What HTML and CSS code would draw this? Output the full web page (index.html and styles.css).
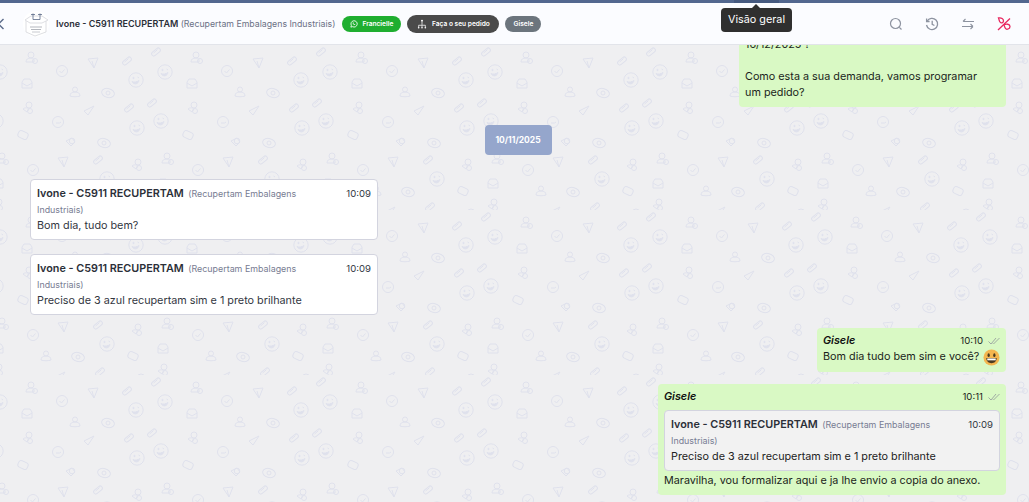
FILE: index.html
```html
<!DOCTYPE html>
<html lang="pt-BR">
<head>
  <meta charset="UTF-8" />
  <meta name="viewport" content="width=device-width, initial-scale=1.0"/>
  <title>Conversa</title>
  <link rel="stylesheet" href="styles.css">
</head>
<body>
  <div class="top-strip"><div class="top-strip-tab"></div></div>

  <!-- Cabecalho do contato -->
  <header class="chat-header">
    <svg class="back-icon" width="8" height="12" viewBox="0 0 8 12"><path d="M6.500 1 1.500 6l5 5" fill="none" stroke="#5b6b8a" stroke-width="1.400"/></svg>
    <svg class="contact-logo" width="26" height="28" viewBox="0 0 26 28">
      <circle cx="13" cy="14" r="13" fill="#fff"/>
      <path d="M2 10 8 6h11l6 4-6 3H7z M3 11v11l9 4 11-4V11" fill="none" stroke="#d4d6db" stroke-width=".8"/>
      <path d="M10 3.500v6h7v-6M8 4.500h4M15 4.500h4" fill="none" stroke="#5a6a88" stroke-width=".8"/>
      <path d="M7 17h12M8 19.500h10" stroke="#b4b7be" stroke-width="1"/>
      <path d="M9 22h8" stroke="#c8cad0" stroke-width="1"/>
    </svg>
    <div class="contact-name">Ivone - C5911 RECUPERTAM <span class="contact-company">(Recupertam Embalagens Industriais)</span></div>
    <span class="pill pill-green">
      <svg width="8" height="8" viewBox="0 0 12 12"><path d="M1.300 10.700 2 8.100A4.700 4.700 0 1 1 3.900 10z" fill="none" stroke="#fff" stroke-width="1.300"/><path d="M4.300 3.700c-.6.700-.3 1.800.6 2.800s2 1.500 2.800.9l.3-.8-1.100-.6-.5.400c-.5-.2-1-.8-1.200-1.300l.4-.5-.6-1.100z" fill="#fff"/></svg>
      Francielle
    </span>
    <span class="pill pill-dark">
      <svg width="10" height="10" viewBox="0 0 12 12"><path d="M6 3.500V7M2 10V7.500h8V10M6 7.500V10" fill="none" stroke="#fff" stroke-width=".9"/><circle cx="6" cy="2.200" r="1.200" fill="#fff"/><circle cx="2" cy="10.500" r="1" fill="#fff"/><circle cx="6" cy="10.500" r="1" fill="#fff"/><circle cx="10" cy="10.500" r="1" fill="#fff"/></svg>
      Faça o seu pedido
    </span>
    <span class="pill pill-gray">Gisele</span>

    <div class="header-actions">
      <svg width="16" height="16" viewBox="0 0 16 16" fill="none" stroke="#8d93a0" stroke-width="1.200"><circle cx="7.500" cy="7.500" r="5"/><path d="m11.300 11.300 2.200 2.200"/></svg>
      <svg width="16" height="16" viewBox="0 0 16 16" fill="none" stroke="#8d93a0" stroke-width="1.300"><path d="M3.100 5.200A5.600 5.600 0 1 1 2.500 9"/><path d="M2.600 2.500v3h3M8.200 4.800v3.500l2.200 1.200"/></svg>
      <svg width="16" height="16" viewBox="0 0 16 16" fill="none" stroke="#8d93a0" stroke-width="1.100"><path d="M14 5.500H3M5.500 3 3 5.500 M2 10.500h11M10.500 8l2.500 2.500 M10.500 13l2.500-2.500"/></svg>
      <svg width="16" height="16" viewBox="0 0 16 16" fill="none" stroke="#e8265e" stroke-width="1.300"><path d="M14 2.500 2 14"/><path d="M2.500 2c3-.5 5 1 5 3S5 7.500 4 6 3 3 2.500 2zM8 9c2-1.500 6-1 6 1.500S10.500 14 9.500 12.500 8.300 10 8 9z"/></svg>
    </div>
  </header>

  <div class="tooltip">Visão geral</div>

  <!-- Mensagens -->
  <main class="chat-body">
    <div class="bubble bubble-first">
      <p>16/12/2025 ?</p>
      <p>&nbsp;</p>
      <p>Como esta a sua demanda, vamos programar um pedido?</p>
    </div>

    <div class="date-chip">10/11/2025</div>

    <div class="card card-in">
      <div class="card-head">
        <div class="card-title"><strong>Ivone - C5911 RECUPERTAM</strong> <span>(Recupertam Embalagens Industriais)</span></div>
        <time>10:09</time>
      </div>
      <p>Bom dia, tudo bem?</p>
    </div>

    <div class="card card-in card-gap">
      <div class="card-head">
        <div class="card-title"><strong>Ivone - C5911 RECUPERTAM</strong> <span>(Recupertam Embalagens Industriais)</span></div>
        <time>10:09</time>
      </div>
      <p>Preciso de 3 azul recupertam sim e 1 preto brilhante</p>
    </div>

    <div class="bubble bubble-short">
      <div class="bubble-head">
        <em>Gisele</em>
        <span class="bubble-time">10:10
          <svg width="12" height="8" viewBox="0 0 12 8" fill="none" stroke="#98a19f" stroke-width=".9"><path d="m.5 4.500 2.500 2.500 5-6M5 6.500l.5.500 6-6"/></svg>
        </span>
      </div>
      <p class="emoji-line">Bom dia tudo bem sim e você?
        <svg class="emoji" width="17" height="17" viewBox="0 0 18 18"><circle cx="9" cy="9" r="8.500" fill="#f4b64f"/><ellipse cx="6" cy="6.500" rx="1.200" ry="2" fill="#4a3a20"/><ellipse cx="12" cy="6.500" rx="1.200" ry="2" fill="#4a3a20"/><path d="M3.500 9.500h11c0 3.500-2.500 5.500-5.500 5.500s-5.500-2-5.500-5.500z" fill="#4a3a20"/><path d="M4.500 10h9v2h-9z" fill="#fff"/></svg>
      </p>
    </div>

    <div class="bubble bubble-reply">
      <div class="bubble-head">
        <em>Gisele</em>
        <span class="bubble-time">10:11
          <svg width="12" height="8" viewBox="0 0 12 8" fill="none" stroke="#98a19f" stroke-width=".9"><path d="m.5 4.500 2.500 2.500 5-6M5 6.500l.5.500 6-6"/></svg>
        </span>
      </div>
      <div class="card card-quote">
        <div class="card-head">
          <div class="card-title"><strong>Ivone - C5911 RECUPERTAM</strong> <span>(Recupertam Embalagens Industriais)</span></div>
          <time>10:09</time>
        </div>
        <p>Preciso de 3 azul recupertam sim e 1 preto brilhante</p>
      </div>
      <p>Maravilha, vou formalizar aqui e ja lhe envio a copia do anexo.</p>
    </div>
  </main>
</body>
</html>
```

FILE: styles.css
```css
* {
  box-sizing: border-box;
}
html, body {
  height: 100%;
}
body {
  margin: 0;
  display: flex;
  flex-direction: column;
  overflow: hidden;
  font-family: Inter, "Liberation Sans", sans-serif;
  color: #222;
  background: #efeff1;
}
p {
  margin: 0;
}

.top-strip {
  flex: none;
  height: 3px;
  background: #52678f;
  display: flex;
}
.top-strip-tab {
  width: 45px;
  margin-left: 734px;
  background: #465a80;
}

.chat-header {
  flex: none;
  height: 42px;
  display: flex;
  align-items: center;
  background: #fbfcff;
  border-bottom: 1px solid #e2e4ea;
}
.back-icon {
  margin-left: -3px;
  margin-right: 18px;
}
.contact-logo {
  margin-right: 7px;
}
.contact-name {
  font-size: 9px;
  font-weight: 600;
  color: #2b2f38;
  white-space: nowrap;
  margin-right: 7px;
}
.contact-company {
  font-size: 8.75px;
  font-weight: 400;
  color: #6b7185;
}
.pill {
  display: inline-flex;
  align-items: center;
  justify-content: center;
  gap: 4px;
  height: 16px;
  border-radius: 9px;
  margin-right: 6px;
  font-size: 6.6px;
  font-weight: 600;
  color: #fff;
}
.pill-green {
  width: 59px;
  background: #1fae30;
}
.pill-dark {
  width: 92px;
  height: 18px;
  background: #4a4a4a;
  gap: 5px;
}
.pill-gray {
  width: 36px;
  background: #6c757d;
}
.header-actions {
  margin-left: auto;
  padding-right: 17px;
  display: flex;
  gap: 20px;
}

.tooltip {
  position: absolute;
  left: 721px;
  top: 8px;
  width: 71px;
  height: 24px;
  border-radius: 4px;
  background: #2f2f2f;
  color: #fff;
  font-size: 10.8px;
  line-height: 24px;
  text-align: center;
  z-index: 5;
}
.tooltip::before {
  content: "";
  position: absolute;
  left: 31px;
  top: -4px;
  border: 4px solid transparent;
  border-top: 0;
  border-bottom-color: #2f2f2f;
}

.chat-body {
  flex: 1;
  min-height: 0;
  overflow: hidden;
  display: flex;
  flex-direction: column;
  padding: 0 23px 0 30px;
  font-size: 10.8px;
  line-height: 16px;
  background-color: #efeff1;
  background-image: url("data:image/svg+xml,<svg xmlns='http://www.w3.org/2000/svg' width='165' height='165' fill='none' stroke='%23dfe1ec' stroke-width='1'>\
<defs>\
<g id='s'><circle r='7.200'/><circle cx='-2.500' cy='-2' r='.7' fill='%23dfe1ec'/><path d='M1.500-3l1.500 1'/><path d='M-4 1.500c2 1 5 .5 7-1-.5 3.500-5 5-7 1z' fill='%23dfe1ec'/></g>\
<g id='c'><circle r='5.500'/><path d='m-2.500 0 2 2 3-3.500'/></g>\
<g id='t'><path d='M-5-4 5-5 1 5z M-1-2 1 5'/></g>\
<g id='a'><path d='M-5 5-1 9 5 0Z' transform='translate(0 -5)'/></g>\
<g id='p'><rect x='-5' y='-2.200' width='10' height='4.400' rx='2.200' transform='rotate(-40)'/><path d='m-2.500 1 4-3.400' /></g>\
<g id='u'><circle cy='-3' r='3'/><path d='M-5 4c0-3 2-4 5-4 2 0 3 1 3 2v2z'/><circle cx='4' cy='3' r='2.500'/></g>\
<g id='x'><circle cx='1' cy='-3' r='3'/><path d='M-5 1c2-2 5-1 6 0l-2 3z'/><circle cx='2' cy='3' r='2.500'/></g>\
<g id='i'><path d='M-5 5V-1l2-3h6l2 3v6z M-5 0l5 3 5-3'/></g>\
<g id='g'><circle cy='-2.500' r='2.500'/><path d='M-5 4c0-3 2-4 5-4s5 1 5 4c-2 1-8 1-10 0z'/></g>\
<g id='e'><ellipse rx='6.500' ry='4.500' transform='rotate(15)'/><circle r='2'/></g>\
<g id='l'><circle r='5.500'/><path d='M-2 1h3.500l1.500-1'/></g>\
<g id='b'><rect x='-5' y='-3.500' width='10' height='7' rx='2.500' transform='rotate(25)'/></g>\
<g id='h'><path d='M-5-1 1-4 4 0 0 4z'/><circle cx='1' cy='-1' r='2.800'/></g>\
</defs>\
<use href='%23c' x='62' y='26'/><use href='%23t' x='93' y='18'/><use href='%23p' x='127' y='16'/><use href='%23p' x='156' y='7'/><use href='%23u' x='31' y='13'/>\
<use href='%23s' x='136' y='35'/><use href='%23s' x='0' y='27'/><use href='%23s' x='165' y='27'/><use href='%23i' x='27' y='38'/>\
<use href='%23g' x='75' y='47'/><use href='%23e' x='108' y='48'/><use href='%23a' x='89' y='66'/><use href='%23p' x='129' y='63'/><use href='%23p' x='152' y='58'/><use href='%23x' x='28' y='63'/>\
<use href='%23l' x='58' y='77'/><use href='%23s' x='137' y='83'/><use href='%23s' x='161' y='76'/><use href='%23s' x='-4' y='76'/><use href='%23b' x='23' y='90'/>\
<use href='%23h' x='71' y='97'/><use href='%23e' x='104' y='98'/><use href='%23t' x='63' y='117'/><use href='%23p' x='98' y='115'/><use href='%23x' x='137' y='120'/>\
<use href='%23u' x='2' y='114'/><use href='%23u' x='167' y='114'/><use href='%23c' x='33' y='125'/><use href='%23s' x='107' y='134'/><use href='%23i' x='163' y='138'/><use href='%23i' x='-2' y='138'/>\
<use href='%23b' x='133' y='146'/><use href='%23g' x='46' y='146'/><use href='%23e' x='78' y='147'/><use href='%23a' x='60' y='167'/><use href='%23p' x='100' y='162'/>\
<circle cx='141' cy='168' r='4'/><use href='%23x' x='163' y='160'/><use href='%23x' x='-2' y='160'/>\
</svg>");
  background-size: 165px 165px;
}

.bubble {
  flex: none;
  align-self: flex-end;
  background: #d9f9c4;
  border-radius: 4px;
  padding: 6px;
  color: #1b1f1b;
}
.bubble-first {
  width: 267px;
  margin-top: -14px;
  padding-right: 20px;
  padding-bottom: 6px;
}
.bubble-short {
  width: 189px;
  margin-top: 13px;
  padding-top: 5px;
  padding-bottom: 5px;
}
.bubble-reply {
  width: 348px;
  margin-top: 12px;
  padding-top: 5px;
}
.bubble-head {
  display: flex;
  justify-content: space-between;
  align-items: center;
  height: 16px;
}
.bubble-head em {
  font-weight: 600;
  color: #111;
}
.bubble-time {
  display: flex;
  align-items: center;
  gap: 5px;
  font-size: 9.6px;
}
.emoji-line {
  display: flex;
  align-items: center;
  justify-content: space-between;
  height: 20px;
  margin-top: -2px;
  white-space: nowrap;
}
.emoji {
  flex: none;
}

.date-chip {
  flex: none;
  align-self: center;
  width: 67px;
  height: 30px;
  margin: 18px 0 24px;
  border-radius: 4px;
  background: #95a6cc;
  color: #fff;
  font-size: 8.5px;
  font-weight: 700;
  line-height: 30px;
  text-align: center;
}

.card {
  background: #fff;
  border: 1px solid #d3d4df;
  border-radius: 4px;
  padding: 6px 6px 5px;
  color: #33373f;
}
.card-in {
  flex: none;
  width: 348px;
  height: 61px;
}
.card-gap {
  margin-top: 14px;
}
.card-quote {
  background: #f2f2f2;
  border-width: 1.5px;
  margin: 5px 0 2px;
  padding: 6px 6px 5px;
  color: #222;
}
.card-head {
  display: flex;
  justify-content: space-between;
  align-items: flex-start;
  gap: 6px;
}
.card-title {
  width: 290px;
  font-size: 8.9px;
  line-height: 16px;
  color: #777c92;
}
.card-title strong {
  font-size: 10.8px;
  font-weight: 600;
  color: #2b2f38;
  margin-right: 2px;
}
.card-head time {
  font-size: 9.6px;
  color: #33373f;
}
```
